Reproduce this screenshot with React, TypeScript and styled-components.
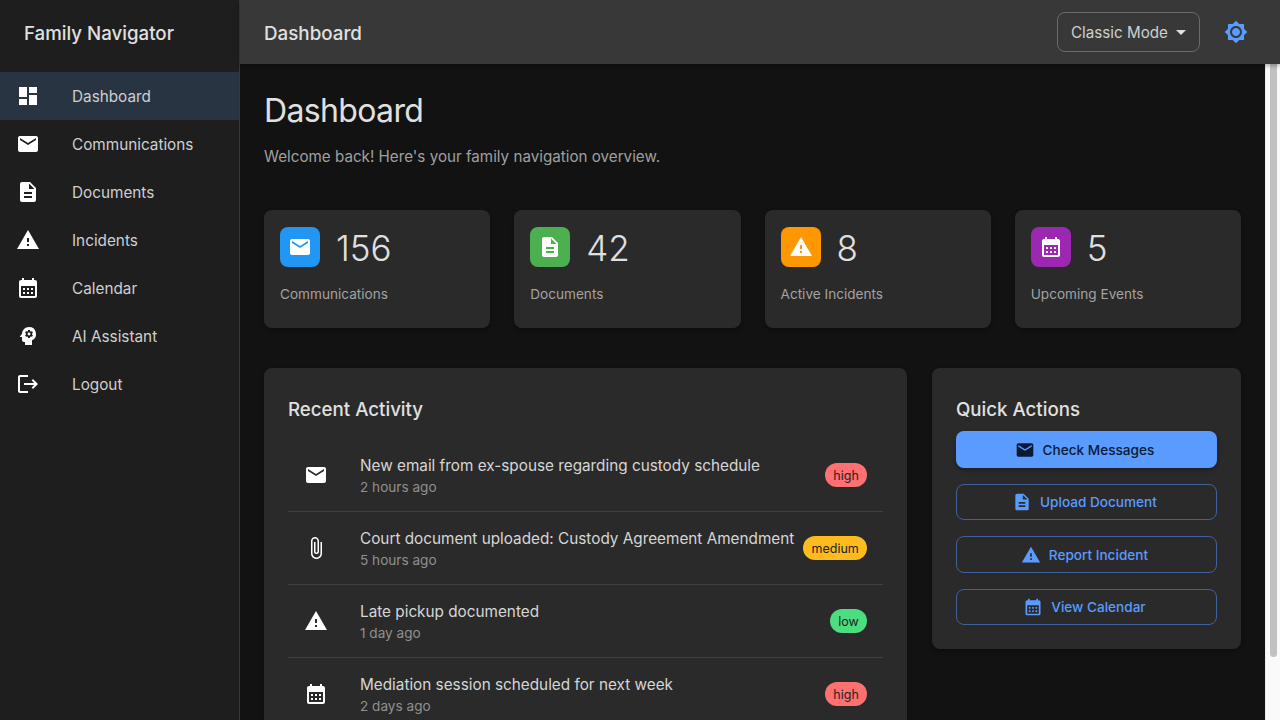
import React from 'react'
import styled, { createGlobalStyle } from 'styled-components'
import {
    MdDashboard,
    MdEmail,
    MdDescription,
    MdWarning,
    MdCalendarMonth,
    MdPsychology,
    MdLogout,
    MdAttachFile,
    MdBrightness7,
    MdArrowDropDown,
} from 'react-icons/md'

const GlobalStyle = createGlobalStyle`
    html, body {
        margin: 0;
        height: 100%;
        overflow: hidden;
        background: #121212;
    }
    body {
        font-family: Inter, 'Liberation Sans', sans-serif;
        color: #e0e0e0;
    }
    * {
        box-sizing: border-box;
    }
`

const Shell = styled.div`
    display: flex;
    width: 1280px;
    height: 720px;
    overflow: hidden;
`

const Sidebar = styled.aside`
    width: 240px;
    flex-shrink: 0;
    background: #1e1e1e;
    border-right: 1px solid #383838;
`

const Brand = styled.div`
    height: 64px;
    padding: 2px 0 0 24px;
    margin-bottom: 8px;
    display: flex;
    align-items: center;
    font-size: 18.7px;
    font-weight: 500;
    color: #e0e0e0;
`

const NavItem = styled.div<{ $active?: boolean }>`
    height: 48px;
    display: flex;
    align-items: center;
    padding-left: 16px;
    background: ${(p) => (p.$active ? '#283442' : 'transparent')};
    color: #cfcfcf;
    font-size: 15.3px;
    svg {
        width: 24px;
        height: 24px;
        color: #fff;
        margin-right: 32px;
        flex-shrink: 0;
    }
`

const Column = styled.div`
    flex: 1;
    min-width: 0;
    display: flex;
    flex-direction: column;
`

const Header = styled.header`
    height: 64px;
    flex-shrink: 0;
    background: #383838;
    box-shadow: 0 2px 4px rgba(0, 0, 0, 0.3);
    display: flex;
    align-items: center;
    padding: 0 24px;
    position: relative;
    z-index: 2;
`

const HeaderTitle = styled.div`
    flex: 1;
    padding-top: 2px;
    font-size: 18.8px;
    font-weight: 500;
    color: #e0e0e0;
`

const ModeSelect = styled.div`
    width: 143px;
    height: 40px;
    border: 1px solid #6b6b6b;
    border-radius: 8px;
    display: flex;
    align-items: center;
    padding-left: 13px;
    font-size: 15.2px;
    white-space: nowrap;
    color: #cfcfcf;
    svg {
        width: 24px;
        height: 24px;
        color: #e0e0e0;
        margin-left: auto;
        margin-right: 6px;
    }
`

const ThemeButton = styled.div`
    width: 40px;
    height: 40px;
    margin-left: 16px;
    display: flex;
    align-items: center;
    justify-content: center;
    color: #5a9bff;
    svg {
        width: 24px;
        height: 24px;
    }
`

const Body = styled.div`
    flex: 1;
    min-height: 0;
    display: flex;
`

const Main = styled.main`
    flex: 1;
    min-width: 0;
    overflow: hidden;
    padding: 24px;
    background: #121212;
`

const ScrollTrack = styled.div`
    width: 15px;
    flex-shrink: 0;
    padding: 0 3px 0 4px;
    background: #fafafa;
    border-left: 1px solid #ececec;
`

const ScrollThumb = styled.div`
    height: 593px;
    background: #c1c1c1;
    border-radius: 0 0 4px 4px;
`

const PageTitle = styled.h1`
    margin: 1px 0 12px;
    font-size: 32px;
    line-height: 44px;
    font-weight: 400;
    letter-spacing: -0.65px;
    color: #e0e0e0;
`

const Subtitle = styled.p`
    margin: 0 0 41px;
    font-size: 15.2px;
    line-height: 24px;
    color: #a0a0a0;
`

const StatGrid = styled.div`
    display: grid;
    grid-template-columns: repeat(4, 1fr);
    gap: 24px;
    margin-bottom: 40px;
`

const Card = styled.section`
    background: #2a2a2a;
    border-radius: 8px;
    box-shadow: 0 2px 4px rgba(0, 0, 0, 0.3);
`

const StatCard = styled(Card)`
    height: 118px;
    padding: 17px 16px 0;
`

const StatTop = styled.div`
    display: flex;
    align-items: center;
    gap: 16px;
    margin-bottom: 17px;
`

const StatIcon = styled.div<{ $bg: string }>`
    width: 40px;
    height: 40px;
    border-radius: 8px;
    background: ${(p) => p.$bg};
    display: flex;
    align-items: center;
    justify-content: center;
    color: #fff;
    svg {
        width: 24px;
        height: 24px;
    }
`

const StatValue = styled.div`
    height: 40px;
    font-size: 35px;
    font-weight: 300;
    line-height: 42px;
    color: #e0e0e0;
`

const StatLabel = styled.div`
    font-size: 13.6px;
    line-height: 20px;
    color: #a3a3a3;
`

const Lower = styled.div`
    display: grid;
    grid-template-columns: 643.3px 1fr;
    gap: 24.6px;
    align-items: start;
`

const ActivityCard = styled(Card)`
    padding: 24px 24px 0;
`

const CardTitle = styled.h2`
    margin: 0;
    font-size: 18.7px;
    line-height: 36px;
    font-weight: 500;
    color: #e0e0e0;
`

const ActivityList = styled.div`
    margin-top: 11px;
`

const ActivityRow = styled.div`
    height: 73px;
    display: flex;
    align-items: center;
    padding: 0 16px;
    border-bottom: 1px solid #404040;
    &:last-child {
        border-bottom-color: transparent;
    }
`

const ActivityIcon = styled.div`
    width: 56px;
    flex-shrink: 0;
    color: #fff;
    svg {
        display: block;
        width: 24px;
        height: 24px;
    }
`

const ActivityText = styled.div`
    flex: 1;
    min-width: 0;
`

const ActivityTitle = styled.div`
    height: 24px;
    font-size: 15.3px;
    line-height: 26px;
    color: #d6d6d6;
    white-space: nowrap;
`

const ActivityTime = styled.div`
    font-size: 13.6px;
    line-height: 20px;
    color: #909090;
`

const Badge = styled.span<{ $level: 'high' | 'medium' | 'low' }>`
    height: 24px;
    padding: 0 8.5px;
    border-radius: 12px;
    display: inline-flex;
    align-items: center;
    flex-shrink: 0;
    font-size: 12.5px;
    color: #1f1f1f;
    background: ${(p) =>
        p.$level === 'high' ? '#ff7070' : p.$level === 'medium' ? '#fdbb1f' : '#4ade80'};
`

const ActionsCard = styled(Card)`
    padding: 24px;
`

const ActionStack = styled.div`
    display: flex;
    flex-direction: column;
    gap: 16px;
    margin-top: 3.3px;
`

const ActionButton = styled.div<{ $primary?: boolean }>`
    height: 36.5px;
    border-radius: 8px;
    display: flex;
    align-items: center;
    justify-content: center;
    font-size: 13.6px;
    font-weight: 500;
    color: ${(p) => (p.$primary ? '#0b1a33' : '#5a9bff')};
    background: ${(p) => (p.$primary ? '#5a9bff' : 'transparent')};
    border: ${(p) => (p.$primary ? 'none' : '1px solid #3f6299')};
    box-shadow: ${(p) => (p.$primary ? '0 2px 4px rgba(0, 0, 0, 0.3)' : 'none')};
    svg {
        width: 20px;
        height: 20px;
        margin: 0 8px 0 -4px;
    }
`

const nav = [
    { label: 'Dashboard', icon: <MdDashboard />, active: true },
    { label: 'Communications', icon: <MdEmail /> },
    { label: 'Documents', icon: <MdDescription /> },
    { label: 'Incidents', icon: <MdWarning /> },
    { label: 'Calendar', icon: <MdCalendarMonth /> },
    { label: 'AI Assistant', icon: <MdPsychology /> },
    { label: 'Logout', icon: <MdLogout /> },
]

const stats = [
    { value: '156', label: 'Communications', bg: '#2196f3', icon: <MdEmail /> },
    { value: '42', label: 'Documents', bg: '#4caf50', icon: <MdDescription /> },
    { value: '8', label: 'Active Incidents', bg: '#ff9800', icon: <MdWarning /> },
    { value: '5', label: 'Upcoming Events', bg: '#9c27b0', icon: <MdCalendarMonth /> },
]

const activity = [
    {
        title: 'New email from ex-spouse regarding custody schedule',
        time: '2 hours ago',
        level: 'high' as const,
        icon: <MdEmail />,
    },
    {
        title: 'Court document uploaded: Custody Agreement Amendment',
        time: '5 hours ago',
        level: 'medium' as const,
        icon: <MdAttachFile />,
    },
    {
        title: 'Late pickup documented',
        time: '1 day ago',
        level: 'low' as const,
        icon: <MdWarning />,
    },
    {
        title: 'Mediation session scheduled for next week',
        time: '2 days ago',
        level: 'high' as const,
        icon: <MdCalendarMonth />,
    },
]

const actions = [
    { label: 'Check Messages', icon: <MdEmail />, primary: true },
    { label: 'Upload Document', icon: <MdDescription /> },
    { label: 'Report Incident', icon: <MdWarning /> },
    { label: 'View Calendar', icon: <MdCalendarMonth /> },
]

function App() {
    return (
        <Shell>
            <GlobalStyle />
            <Sidebar>
                <Brand>Family Navigator</Brand>
                {nav.map((item) => (
                    <NavItem key={item.label} $active={item.active}>
                        {item.icon}
                        {item.label}
                    </NavItem>
                ))}
            </Sidebar>
            <Column>
                <Header>
                    <HeaderTitle>Dashboard</HeaderTitle>
                    <ModeSelect>
                        Classic Mode
                        <MdArrowDropDown />
                    </ModeSelect>
                    <ThemeButton>
                        <MdBrightness7 />
                    </ThemeButton>
                </Header>
                <Body>
                    <Main>
                        <PageTitle>Dashboard</PageTitle>
                        <Subtitle>Welcome back! Here's your family navigation overview.</Subtitle>
                        <StatGrid>
                            {stats.map((stat) => (
                                <StatCard key={stat.label}>
                                    <StatTop>
                                        <StatIcon $bg={stat.bg}>{stat.icon}</StatIcon>
                                        <StatValue>{stat.value}</StatValue>
                                    </StatTop>
                                    <StatLabel>{stat.label}</StatLabel>
                                </StatCard>
                            ))}
                        </StatGrid>
                        <Lower>
                            <ActivityCard>
                                <CardTitle>Recent Activity</CardTitle>
                                <ActivityList>
                                    {activity.map((row) => (
                                        <ActivityRow key={row.title}>
                                            <ActivityIcon>{row.icon}</ActivityIcon>
                                            <ActivityText>
                                                <ActivityTitle>{row.title}</ActivityTitle>
                                                <ActivityTime>{row.time}</ActivityTime>
                                            </ActivityText>
                                            <Badge $level={row.level}>{row.level}</Badge>
                                        </ActivityRow>
                                    ))}
                                </ActivityList>
                            </ActivityCard>
                            <ActionsCard>
                                <CardTitle>Quick Actions</CardTitle>
                                <ActionStack>
                                    {actions.map((action) => (
                                        <ActionButton key={action.label} $primary={action.primary}>
                                            {action.icon}
                                            {action.label}
                                        </ActionButton>
                                    ))}
                                </ActionStack>
                            </ActionsCard>
                        </Lower>
                    </Main>
                    <ScrollTrack>
                        <ScrollThumb />
                    </ScrollTrack>
                </Body>
            </Column>
        </Shell>
    )
}

export default App
